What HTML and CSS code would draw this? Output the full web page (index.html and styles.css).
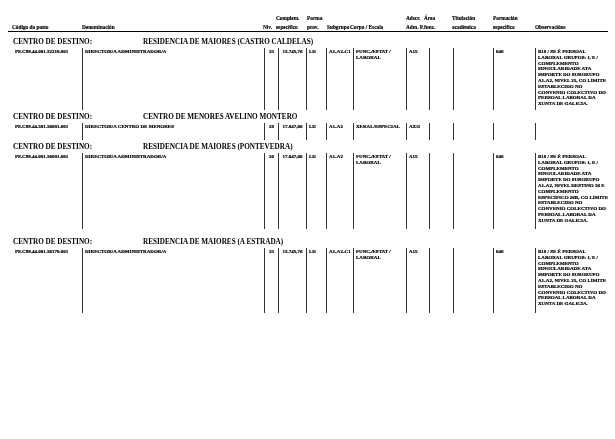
FILE: index.html
```html
<!DOCTYPE html>
<html lang="gl">
<head>
<meta charset="utf-8">
<title>Postos</title>
<link rel="stylesheet" href="styles.css">
</head>
<body>
<div class="page">
  <div class="thead">
    <div class="th th-code"><span></span><span>Código do posto</span></div>
    <div class="th"><span></span><span>Denominación</span></div>
    <div class="th"><span></span><span>Niv.</span></div>
    <div class="th"><span>Complem.</span><span>específico</span></div>
    <div class="th"><span>Forma</span><span>prov.</span></div>
    <div class="th"><span></span><span>Subgrupo</span></div>
    <div class="th"><span></span><span>Corpo / Escala</span></div>
    <div class="th"><span>Adscr.</span><span>Adm. P.</span></div>
    <div class="th"><span>Área</span><span>func.</span></div>
    <div class="th"><span>Titulación</span><span>académica</span></div>
    <div class="th"><span>Formación</span><span>específica</span></div>
    <div class="th"><span></span><span>Observacións</span></div>
  </div>

  <section class="centro">
    <div class="centro-title"><span class="lbl">CENTRO DE DESTINO:</span><span class="name">RESIDENCIA DE MAIORES (CASTRO CALDELAS)</span></div>
    <div class="row">
      <div class="td td-code">PS.C99.44.001.32210.001</div>
      <div class="td">DIRECTOR/A ADMINISTRADOR/A</div>
      <div class="td td-c">25</div>
      <div class="td td-c">13.745,76</div>
      <div class="td">LD</div>
      <div class="td">A1-A2-C1</div>
      <div class="td">FUNC./ESTAT /<br>LABORAL</div>
      <div class="td">A15</div>
      <div class="td"></div>
      <div class="td"></div>
      <div class="td">640</div>
      <div class="td">B18 / SE É PERSOAL<br>LABORAL GRUPOS: I, E /<br>COMPLEMENTO<br>SINGULARIDADE ATA<br>IMPORTE DO SUBGRUPO<br>A1-A2, NIVEL 25, CO LÍMITE<br>ESTABLECIDO NO<br>CONVENIO COLECTIVO DO<br>PERSOAL LABORAL DA<br>XUNTA DE GALICIA.</div>
    </div>
  </section>

  <section class="centro">
    <div class="centro-title"><span class="lbl">CENTRO DE DESTINO:</span><span class="name">CENTRO DE MENORES AVELINO MONTERO</span></div>
    <div class="row">
      <div class="td td-code">PS.C99.44.301.36001.001</div>
      <div class="td">DIRECTOR/A CENTRO DE MENORES</div>
      <div class="td td-c">28</div>
      <div class="td td-c">17.047,66</div>
      <div class="td">LD</div>
      <div class="td">A1-A2</div>
      <div class="td">XERAL/ESPECIAL</div>
      <div class="td">AXG</div>
      <div class="td"></div>
      <div class="td"></div>
      <div class="td"></div>
      <div class="td"></div>
    </div>
  </section>

  <section class="centro centro-tall">
    <div class="centro-title"><span class="lbl">CENTRO DE DESTINO:</span><span class="name">RESIDENCIA DE MAIORES (PONTEVEDRA)</span></div>
    <div class="row">
      <div class="td td-code">PS.C99.44.001.36001.001</div>
      <div class="td">DIRECTOR/A ADMINISTRADOR/A</div>
      <div class="td td-c">26</div>
      <div class="td td-c">17.047,66</div>
      <div class="td">LD</div>
      <div class="td">A1-A2</div>
      <div class="td">FUNC./ESTAT /<br>LABORAL</div>
      <div class="td">A15</div>
      <div class="td"></div>
      <div class="td"></div>
      <div class="td">640</div>
      <div class="td">B18 / SE É PERSOAL<br>LABORAL GRUPOS: I, E /<br>COMPLEMENTO<br>SINGULARIDADE ATA<br>IMPORTE DO SUBGRUPO<br>A1-A2, NIVEL DESTINO 26 E<br>COMPLEMENTO<br>ESPECÍFICO 26B, CO LÍMITE<br>ESTABLECIDO NO<br>CONVENIO COLECTIVO DO<br>PERSOAL LABORAL DA<br>XUNTA DE GALICIA.</div>
    </div>
  </section>

  <section class="centro centro-spaced">
    <div class="centro-title"><span class="lbl">CENTRO DE DESTINO:</span><span class="name">RESIDENCIA DE MAIORES (A ESTRADA)</span></div>
    <div class="row">
      <div class="td td-code">PS.C99.44.001.36170.001</div>
      <div class="td">DIRECTOR/A ADMINISTRADOR/A</div>
      <div class="td td-c">25</div>
      <div class="td td-c">13.745,76</div>
      <div class="td">LD</div>
      <div class="td">A1-A2-C1</div>
      <div class="td">FUNC./ESTAT /<br>LABORAL</div>
      <div class="td">A15</div>
      <div class="td"></div>
      <div class="td"></div>
      <div class="td">640</div>
      <div class="td">B18 / SE É PERSOAL<br>LABORAL GRUPOS: I, E /<br>COMPLEMENTO<br>SINGULARIDADE ATA<br>IMPORTE DO SUBGRUPO<br>A1-A2, NIVEL 25, CO LÍMITE<br>ESTABLECIDO NO<br>CONVENIO COLECTIVO DO<br>PERSOAL LABORAL DA<br>XUNTA DE GALICIA.</div>
    </div>
  </section>
</div>
</body>
</html>
```
FILE: styles.css
```css
html, body {
  margin: 0;
  background: #fff;
}
body {
  font-family: "Liberation Serif", "Times New Roman", serif;
  font-weight: bold;
  color: #000;
}
.page {
  width: 600px;
  padding: 14px 7px 0 8px;
  filter: grayscale(1);
}
.thead {
  display: grid;
  grid-template-columns: 74px 181px 13px 31px 20px 23px 56px 18px 28px 41px 42px 73px;
  border-bottom: 1px solid #000;
  font-size: 5.3px;
  line-height: 8.5px;
  margin-bottom: 5px;
  -webkit-text-stroke: 0.15px #000;
}
.th {
  display: flex;
  flex-direction: column;
  white-space: nowrap;
}
.th span {
  height: 8.5px;
}
.th-code {
  padding-left: 4px;
}
.centro-title {
  display: flex;
  font-size: 7.2px;
  line-height: 10px;
  margin: 2px 0 1px;
  padding-left: 5px;
  white-space: nowrap;
}
.centro-title .lbl {
  width: 130px;
}
.centro:first-of-type .centro-title {
  margin-top: 3px;
}
.centro-spaced .centro-title {
  margin-top: 8px;
}
.row {
  display: grid;
  grid-template-columns: 74px 182px 14px 28px 20px 27px 53px 23px 24px 40px 42px 73px;
  min-height: 17px;
  font-size: 5px;
  line-height: 5.8px;
  -webkit-text-stroke: 0.2px #000;
}
.centro-tall .row {
  min-height: 76px;
}
.centro-spaced .row {
  min-height: 65px;
}
.td {
  border-left: 1px solid #333;
  padding: 1px 1px 3px 2px;
  white-space: nowrap;
}
.td-code {
  border-left: none;
  padding-left: 7px;
}
.td-c {
  text-align: center;
  padding-left: 1px;
}
```
